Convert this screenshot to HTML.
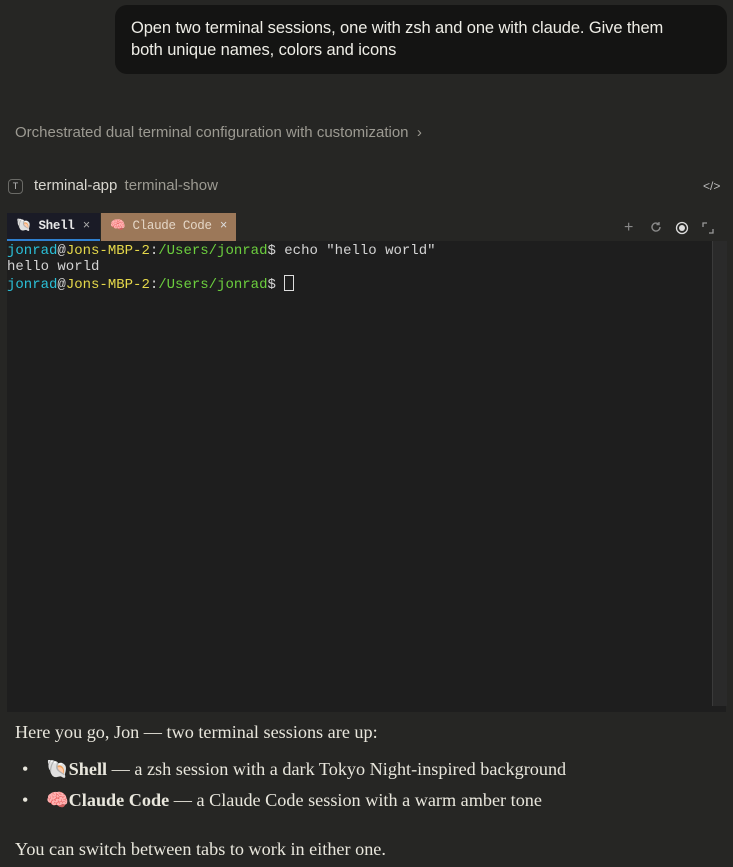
<!DOCTYPE html>
<html><head><meta charset="utf-8"><style>
body{margin:0;width:733px;height:867px;background:#262624;overflow:hidden;position:relative;font-family:"Liberation Sans",sans-serif;color:#e8e6dc}
.abs{position:absolute}
.bubble{left:115px;top:5px;width:612px;height:69px;background:#141413;border-radius:12px;box-sizing:border-box;padding:12px 16px;font-size:16.5px;line-height:22px;color:#eeede6;letter-spacing:-0.1px}
.orch{left:15px;top:124px;font-size:15px;color:#9c9a92}
.mono{font-family:"Liberation Mono","DejaVu Sans Mono",monospace}
.term{left:7px;top:241px;width:719px;height:471px;background:#1e1e1e}
.tl{font-size:14px;line-height:16px;white-space:pre;color:#d4d4d4}
.c{color:#2bc0d8}.y{color:#e5d84a}.g{color:#6ccf3e}
.serif{font-family:"Liberation Serif",serif;font-size:18.2px;color:#e8e6dc}
</style></head><body>
<div class="abs bubble">Open two terminal sessions, one with zsh and one with claude. Give them<br>both unique names, colors and icons</div>
<div class="abs orch">Orchestrated dual terminal configuration with customization&nbsp; ›</div>

<div class="abs" style="left:8px;top:179px;width:15px;height:15px;border:1px solid #6a6a66;border-radius:4px;box-sizing:border-box;font-size:9px;color:#bbb;text-align:center;line-height:13px">T</div>
<div class="abs" style="left:34px;top:177px;font-size:15px;color:#d8d6cf">terminal-app <span style="color:#9c9a92;margin-left:3px">terminal-show</span></div>
<div class="abs" style="left:703px;top:179px;font-size:12px;color:#bbb">&lt;/&gt;</div>

<div class="abs" style="left:7px;top:213px;width:93px;height:26px;background:#1a1b26"></div>
<div class="abs" style="left:7px;top:239px;width:93px;height:3px;background:#2f7fd0"></div>
<div class="abs mono" style="left:16px;top:218px;font-size:12.5px;color:#e8e8e8;font-weight:bold;letter-spacing:-0.3px">🐚 Shell <span style="color:#aaa;font-weight:normal;margin-left:1px">×</span></div>
<div class="abs" style="left:101px;top:213px;width:135px;height:28px;background:#9c7859"></div>
<div class="abs mono" style="left:110px;top:218px;font-size:12.5px;color:#e4d6c6;letter-spacing:-0.3px">🧠 Claude Code <span style="color:#ddd;margin-left:1px">×</span></div>

<div class="abs" style="left:624px;top:219px;font-size:16px;color:#888">+</div>
<svg class="abs" style="left:650px;top:221px" width="12" height="12" viewBox="0 0 12 12"><path d="M10 6a4 4 0 1 1-1.2-2.8M9 1v2.5H6.5" fill="none" stroke="#888" stroke-width="1.4"/></svg>
<svg class="abs" style="left:675px;top:221px" width="14" height="14" viewBox="0 0 14 14"><circle cx="7" cy="7" r="5.5" fill="none" stroke="#ddd" stroke-width="1.3"/><circle cx="7" cy="7" r="3" fill="#ddd"/></svg>
<svg class="abs" style="left:702px;top:222px" width="12" height="12" viewBox="0 0 12 12"><path d="M1 5V1h4M11 7v4H7" fill="none" stroke="#999" stroke-width="1.3"/></svg>

<div class="abs term"></div>
<div class="abs" style="left:712px;top:241px;width:14px;height:465px;background:#2a2a2a;border-left:1px solid #3a3a3a"></div>
<div class="abs tl mono" style="left:7px;top:243px"><span class="c">jonrad</span>@<span class="y">Jons-MBP-2</span>:<span class="g">/Users/jonrad</span>$ echo "hello world"
hello world
<span class="c">jonrad</span>@<span class="y">Jons-MBP-2</span>:<span class="g">/Users/jonrad</span>$ <span style="display:inline-block;width:8px;height:14px;border:1px solid #ddd;vertical-align:-3px"></span></div>

<div class="abs serif" style="left:15px;top:722px">Here you go, Jon — two terminal sessions are up:</div>
<div class="abs serif" style="left:22px;top:759px">•</div>
<div class="abs serif" style="left:46px;top:759px">🐚<b>Shell</b> — a zsh session with a dark Tokyo Night-inspired background</div>
<div class="abs serif" style="left:22px;top:790px">•</div>
<div class="abs serif" style="left:46px;top:790px">🧠<b>Claude Code</b> — a Claude Code session with a warm amber tone</div>
<div class="abs serif" style="left:15px;top:839px">You can switch between tabs to work in either one.</div>
</body></html>
